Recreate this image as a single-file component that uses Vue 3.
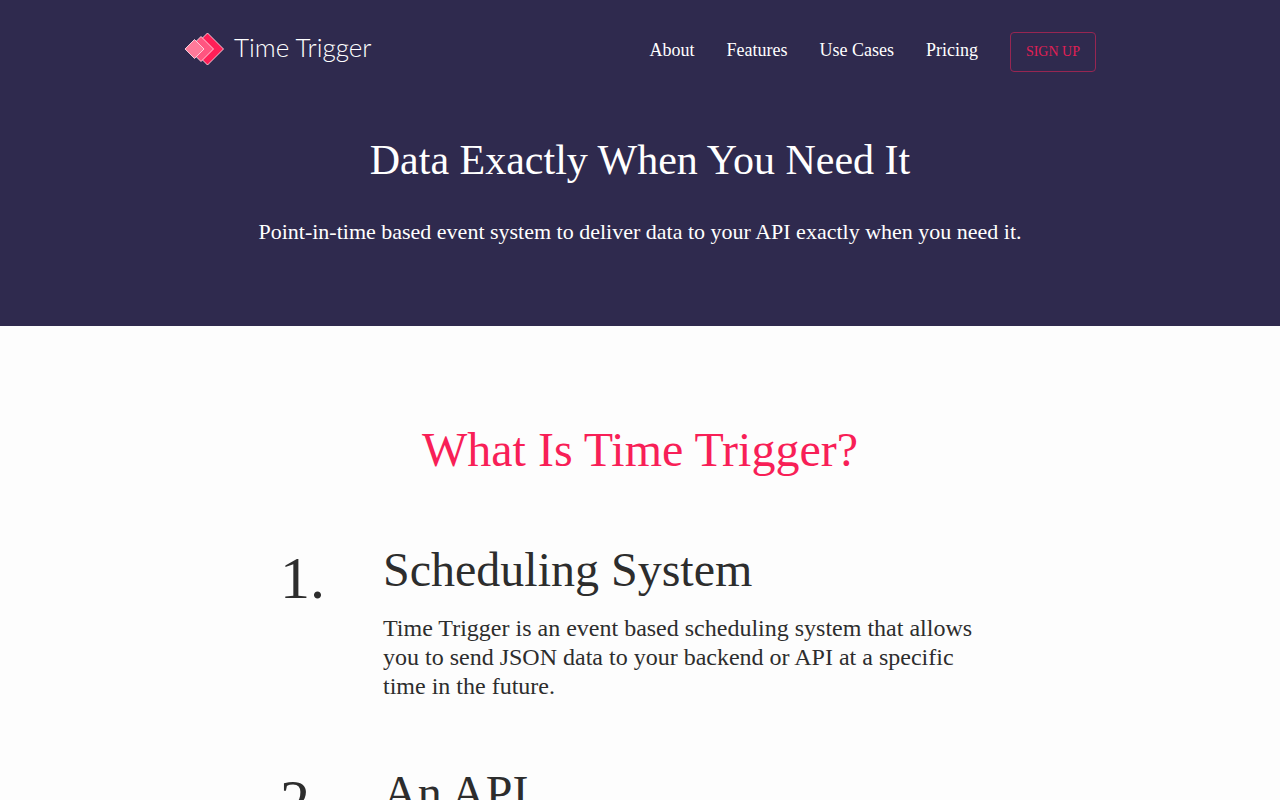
<script setup>
const links = ['About', 'Features', 'Use Cases', 'Pricing']
const items = [
  {
    title: 'Scheduling System',
    text: 'Time Trigger is an event based scheduling system that allows you to send JSON data to your backend or API at a specific time in the future.',
  },
  { title: 'An API', text: '' },
]
</script>

<template>
  <div class="page">
    <header class="hero">
      <div class="bar">
        <a class="brand" href="#">
          <svg class="mark" viewBox="0 0 40 34" width="40" height="34" aria-hidden="true">
            <g stroke="#ffd9e2" stroke-width=".9" stroke-linejoin="round">
              <path fill="#ff1f57" d="M23.5 1 39.5 17 23.5 33 7.5 17Z" />
              <path fill="#ff5580" d="M17 4.5 29.5 17 17 29.5 4.5 17Z" />
              <path fill="#ff7a9a" d="M10.5 7.5 20 17 10.5 26.5 1 17Z" />
            </g>
          </svg>
          <span class="name">Time Trigger</span>
        </a>
        <nav class="nav">
          <a v-for="link in links" :key="link" href="#">{{ link }}</a>
          <button class="signup" type="button">SIGN UP</button>
        </nav>
      </div>
      <h1>Data Exactly When You Need It</h1>
      <p class="lead">Point-in-time based event system to deliver data to your API exactly when you need it.</p>
    </header>
    <main>
      <h2>What Is Time Trigger?</h2>
      <section v-for="(item, i) in items" :key="item.title" class="item">
        <div class="number">{{ i + 1 }}.</div>
        <div class="body">
          <h3>{{ item.title }}</h3>
          <p v-if="item.text">{{ item.text }}</p>
        </div>
      </section>
    </main>
  </div>
</template>

<style>
body {
  margin: 0;
  background: #fdfdfd;
}
</style>

<style scoped>
.page {
  min-height: 100vh;
  font-family: "Liberation Serif", "Times New Roman", serif;
  color: #2d2d2d;
}
h1, h2, h3, p {
  margin: 0;
  font-weight: 400;
}
.hero {
  background: #2f2a4e;
  color: #fff;
  text-align: center;
  padding: 32px 24px 80px;
}
.bar {
  display: flex;
  justify-content: space-between;
  max-width: 912px;
  margin: 0 auto;
}
.brand {
  display: flex;
  gap: 10px;
  height: 34px;
  color: #fff;
  text-decoration: none;
}
.name {
  font: 300 26px/30px Lato, sans-serif;
}
.nav {
  display: flex;
  gap: 32px;
  font-size: 18px;
  line-height: 36px;
}
.nav a {
  color: #fff;
  text-decoration: none;
}
.signup {
  height: 40px;
  padding: 0 15px;
  border: 1px solid #972652;
  border-radius: 4px;
  background: transparent;
  color: #e01f55;
  font-family: inherit;
  font-size: 14px;
}
h1 {
  margin-top: 64px;
  font-size: 42px;
  line-height: 48px;
}
.lead {
  margin-top: 36px;
  padding-bottom: 2px;
  font-size: 22px;
  line-height: 24px;
}
main {
  max-width: 720px;
  margin: 0 auto;
  padding: 96px 24px;
}
h2 {
  margin-bottom: 64px;
  text-align: center;
  font-size: 48px;
  line-height: 56px;
  color: #f81f57;
}
.item {
  display: grid;
  grid-template-columns: 103px minmax(0, 1fr);
  margin-bottom: 64px;
}
.number {
  font-size: 60px;
  line-height: 72px;
}
h3 {
  margin-bottom: 16px;
  font-size: 48px;
  line-height: 56px;
}
.body p {
  font-size: 24px;
  line-height: 29px;
}
</style>
